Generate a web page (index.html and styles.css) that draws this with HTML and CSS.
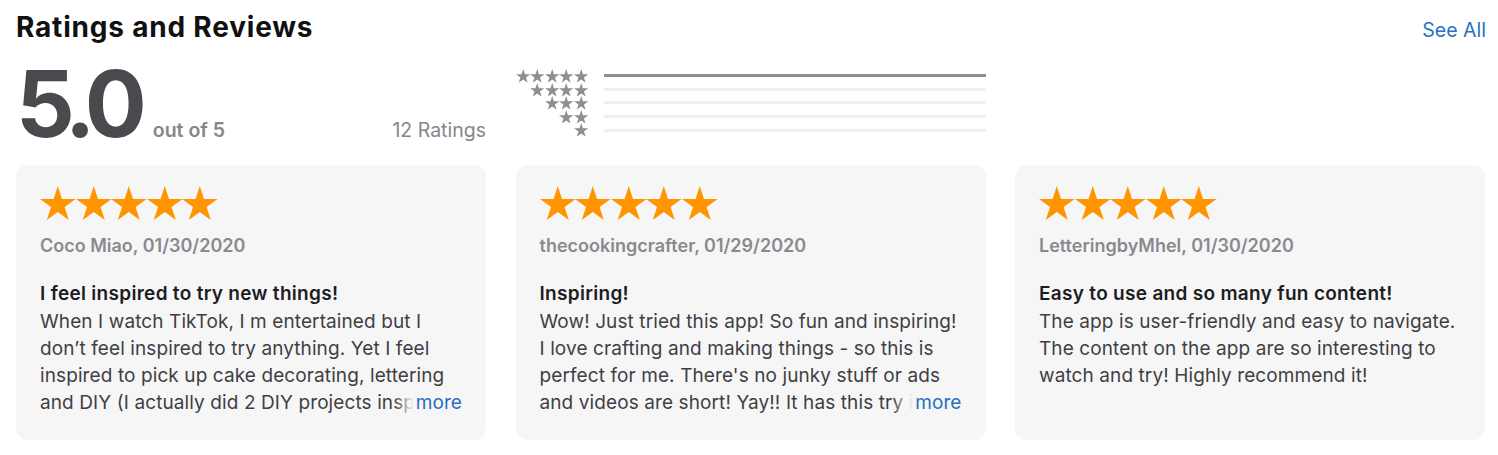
FILE: index.html
```html
<!DOCTYPE html>
<html lang="en">
<head>
<meta charset="utf-8">
<title>Ratings and Reviews</title>
<link rel="stylesheet" href="styles.css">
</head>
<body>
<svg width="0" height="0" class="defs" aria-hidden="true">
  <defs>
    <symbol id="star" viewBox="0 0 36 34.3">
      <path d="M18 0L22.25 13.08L36 13.08L24.88 21.16L29.13 34.24L18 26.16L6.87 34.24L11.12 21.16L0 13.08L13.75 13.08Z"/>
    </symbol>
  </defs>
</svg>
<section class="ratings">
  <header class="header">
    <h2 class="title">Ratings and Reviews</h2>
    <a class="see-all" href="#">See All</a>
  </header>

  <div class="summary">
    <div class="score-block">
      <span class="score">5.0</span>
      <span class="out-of">out of 5</span>
      <span class="count">12 Ratings</span>
    </div>
    <div class="histogram">
      <div class="hist-row">
        <div class="mini-stars"><svg><use href="#star"/></svg><svg><use href="#star"/></svg><svg><use href="#star"/></svg><svg><use href="#star"/></svg><svg><use href="#star"/></svg></div>
        <div class="bar"><div class="fill" style="width:100%"></div></div>
      </div>
      <div class="hist-row">
        <div class="mini-stars"><svg><use href="#star"/></svg><svg><use href="#star"/></svg><svg><use href="#star"/></svg><svg><use href="#star"/></svg></div>
        <div class="bar"><div class="fill" style="width:0%"></div></div>
      </div>
      <div class="hist-row">
        <div class="mini-stars"><svg><use href="#star"/></svg><svg><use href="#star"/></svg><svg><use href="#star"/></svg></div>
        <div class="bar"><div class="fill" style="width:0%"></div></div>
      </div>
      <div class="hist-row">
        <div class="mini-stars"><svg><use href="#star"/></svg><svg><use href="#star"/></svg></div>
        <div class="bar"><div class="fill" style="width:0%"></div></div>
      </div>
      <div class="hist-row">
        <div class="mini-stars"><svg><use href="#star"/></svg></div>
        <div class="bar"><div class="fill" style="width:0%"></div></div>
      </div>
    </div>
  </div>

  <div class="cards">
    <article class="card">
      <div class="stars"><svg><use href="#star"/></svg><svg><use href="#star"/></svg><svg><use href="#star"/></svg><svg><use href="#star"/></svg><svg><use href="#star"/></svg></div>
      <div class="meta">Coco Miao, 01/30/2020</div>
      <h3 class="review-title">I feel inspired to try new things!</h3>
      <div class="body">
        <p>When I watch TikTok, I m entertained but I don’t feel inspired to try anything. Yet I feel inspired to pick up cake decorating, lettering and DIY (I actually did 2 DIY projects inspired by the videos on this app already!)</p>
        <a class="more" href="#">more</a>
      </div>
    </article>
    <article class="card">
      <div class="stars"><svg><use href="#star"/></svg><svg><use href="#star"/></svg><svg><use href="#star"/></svg><svg><use href="#star"/></svg><svg><use href="#star"/></svg></div>
      <div class="meta">thecookingcrafter, 01/29/2020</div>
      <h3 class="review-title">Inspiring!</h3>
      <div class="body">
        <p>Wow! Just tried this app! So fun and inspiring! I love crafting and making things - so this is perfect for me. There's no junky stuff or ads and videos are short! Yay!! It has this try it feature that I love.</p>
        <a class="more" href="#">more</a>
      </div>
    </article>
    <article class="card">
      <div class="stars"><svg><use href="#star"/></svg><svg><use href="#star"/></svg><svg><use href="#star"/></svg><svg><use href="#star"/></svg><svg><use href="#star"/></svg></div>
      <div class="meta">LetteringbyMhel, 01/30/2020</div>
      <h3 class="review-title">Easy to use and so many fun content!</h3>
      <div class="body">
        <p>The app is user-friendly and easy to navigate. The content on the app are so interesting to watch and try! Highly recommend it!</p>
      </div>
    </article>
  </div>
</section>
</body>
</html>
```

FILE: styles.css
```css
* { box-sizing: border-box; }

html, body {
  margin: 0;
  padding: 0;
  background: #ffffff;
}

body {
  font-family: Inter, "Noto Sans", "Liberation Sans", sans-serif;
  color: #1d1d1f;
}

.defs {
  position: absolute;
  width: 0;
  height: 0;
  overflow: hidden;
}

.ratings {
  padding: 11px 12px 0 16px;
}

.header {
  display: flex;
  justify-content: space-between;
  align-items: baseline;
}

.title {
  margin: 0;
  font-size: 28px;
  line-height: 32px;
  font-weight: 700;
  letter-spacing: 0.8px;
  color: #111111;
}

.see-all {
  font-size: 19.5px;
  color: #2a6fc0;
  text-decoration: none;
}

.summary {
  display: flex;
  align-items: flex-start;
  margin-top: 15px;
}

.score-block {
  width: 470px;
  display: flex;
  align-items: baseline;
}

.score {
  font-size: 92px;
  line-height: 92px;
  font-weight: 700;
  letter-spacing: -8px;
  color: #4a4a4e;
  margin-left: 0;
}

.out-of {
  margin-left: 14px;
  font-size: 19.5px;
  font-weight: 600;
  color: #86868b;
}

.count {
  margin-left: auto;
  font-size: 19.5px;
  color: #86868b;
}

.histogram {
  width: 470px;
  margin-left: 30px;
  margin-top: 11px;
  display: flex;
  flex-direction: column;
}

.hist-row {
  display: flex;
  align-items: center;
  height: 13.6px;
}

.mini-stars {
  width: 72px;
  display: flex;
  justify-content: flex-end;
  fill: #8e8e93;
}

.mini-stars svg {
  width: 14.4px;
  height: 13.7px;
  display: block;
}

.bar {
  flex: 1;
  height: 3px;
  margin-left: 16px;
  background: #efeff4;
}

.fill {
  height: 100%;
  background: #8e8e93;
}

.cards {
  display: grid;
  grid-template-columns: 470px 470px 470px;
  column-gap: 29.5px;
  margin-top: 15px;
}

.card {
  height: 275px;
  background: #f6f6f7;
  border-radius: 12px;
  padding: 21px 24px 0 24px;
}

.stars {
  display: flex;
  fill: #ff9500;
}

.stars svg {
  width: 35.6px;
  height: 34px;
  display: block;
}

.meta {
  margin-top: 12px;
  font-size: 18px;
  line-height: 27px;
  font-weight: 600;
  color: #8a8a8e;
}

.review-title {
  margin: 21px 0 0 0;
  font-size: 19px;
  line-height: 28px;
  font-weight: 600;
  letter-spacing: 0.3px;
  color: #1d1d1f;
}

.body {
  position: relative;
  max-height: 108px;
  overflow: hidden;
}

.body p {
  margin: 0;
  font-size: 19px;
  line-height: 27px;
  letter-spacing: 0.1px;
  color: #3f3f43;
}

.more {
  position: absolute;
  right: 0;
  bottom: 0;
  line-height: 27px;
  font-size: 19px;
  letter-spacing: 0.1px;
  color: #2a6fc0;
  text-decoration: none;
  padding-left: 22px;
  background: linear-gradient(to right, rgba(246,246,247,0) 0, #f6f6f7 20px);
}
```
